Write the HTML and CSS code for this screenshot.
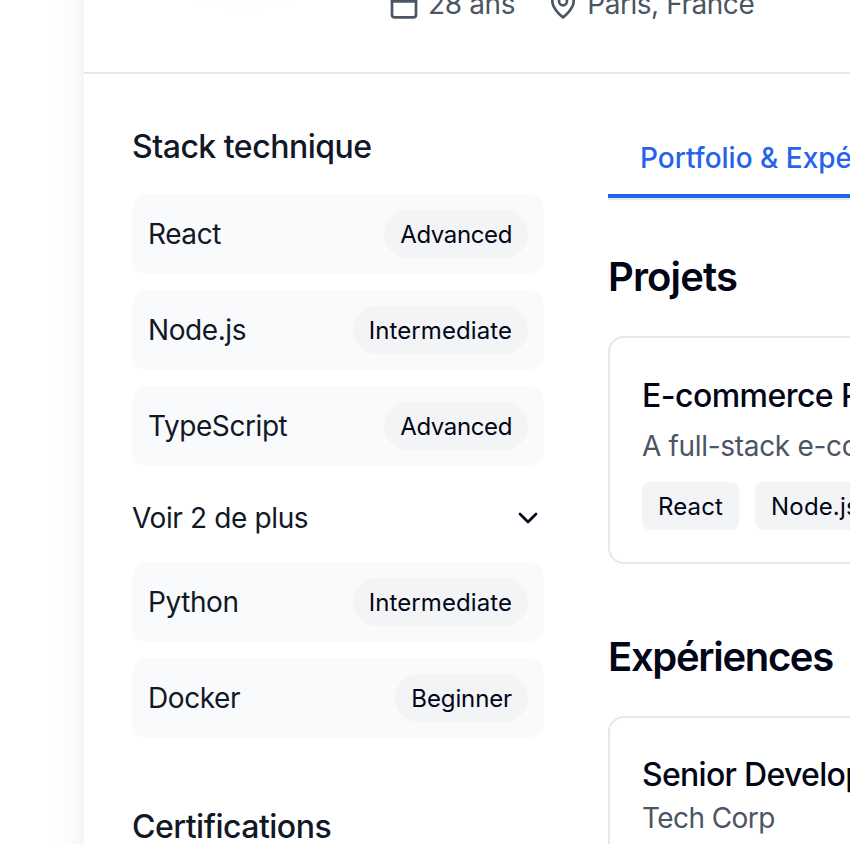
FILE: index.html
```html
<!DOCTYPE html>
<html lang="fr">
<head>
<meta charset="utf-8">
<title>Profil</title>
<link rel="stylesheet" href="styles.css">
</head>
<body>
<main class="card">
  <header class="profile">
    <div class="avatar"></div>
    <div class="meta">
      <span class="meta-item age"><svg class="icon" viewBox="0 0 24 24"><path d="M8 2v4M16 2v4M3 10h18"/><rect x="3" y="4" width="18" height="18" rx="2"/></svg><span>28 ans</span></span>
      <span class="meta-item place"><svg class="icon" viewBox="0 0 24 24"><path d="M20 10c0 6-8 12-8 12s-8-6-8-12a8 8 0 0 1 16 0Z"/><circle cx="12" cy="10" r="3"/></svg><span>Paris, France</span></span>
    </div>
  </header>
  <div class="columns">
    <aside class="side">
      <h3 class="side-title">Stack technique</h3>
      <ul class="skills">
        <li class="skill"><span>React</span><span class="level adv">Advanced</span></li>
        <li class="skill"><span>Node.js</span><span class="level int">Intermediate</span></li>
        <li class="skill"><span>TypeScript</span><span class="level adv">Advanced</span></li>
      </ul>
      <button class="more"><span>Voir 2 de plus</span><svg class="chevron" viewBox="0 0 24 24"><path d="m6 9 6 6 6-6"/></svg></button>
      <ul class="skills">
        <li class="skill"><span>Python</span><span class="level int">Intermediate</span></li>
        <li class="skill"><span>Docker</span><span class="level beg">Beginner</span></li>
      </ul>
      <h3 class="side-title cert">Certifications</h3>
    </aside>
    <section class="content">
      <nav class="tabs"><a class="tab">Portfolio &amp; Expériences</a></nav>
      <h2 class="section-title">Projets</h2>
      <article class="box project">
        <h4 class="box-title">E-commerce Platform</h4>
        <p class="desc">A full-stack e-commerce platform</p>
        <div class="tags"><span class="tag">React</span><span class="tag">Node.js</span></div>
      </article>
      <h2 class="section-title exp">Expériences</h2>
      <article class="box job">
        <h4 class="box-title">Senior Developer</h4>
        <p class="desc">Tech Corp</p>
      </article>
    </section>
  </div>
</main>
</body>
</html>
```
FILE: styles.css
```css
* { box-sizing: border-box; margin: 0; padding: 0; }
html, body { width: 850px; height: 844px; overflow: hidden; }
body { background: #fff; font-family: Inter, sans-serif; color: #111827; padding-left: 84px; }
.card { width: 1200px; height: 1400px; margin-top: -200px; padding-top: 200px; background: #fff; box-shadow: 0 40px 46px -10px rgba(0, 0, 0, .1), 0 16px 20px -12px rgba(0, 0, 0, .1); }
.profile { height: 74px; border-bottom: 2px solid #e5e7eb; display: flex; }
.avatar { width: 224px; height: 224px; margin: -248px 32px 0 48px; flex: none; border-radius: 50%; box-shadow: 0 20px 30px -6px rgba(0, 0, 0, .05); }
.meta { display: flex; gap: 32px; height: 32px; margin-top: -12px; color: #4b5563; font-size: 28px; line-height: 32px; }
.meta-item { display: flex; align-items: center; gap: 8px; }
.age { letter-spacing: -.35px; }
.place { letter-spacing: -.45px; }
.icon { width: 32px; height: 32px; fill: none; stroke: currentColor; stroke-width: 2; stroke-linecap: round; stroke-linejoin: round; }
.columns { display: flex; gap: 64px; padding: 48px; }
.side { width: 412px; flex: none; }
.side-title { font-size: 32px; line-height: 48px; font-weight: 500; letter-spacing: -.5px; padding-top: 1px; margin-bottom: 23px; }
.skills { list-style: none; display: grid; gap: 16px; }
.skill { height: 80px; padding: 0 16px; border-radius: 16px; background: #f9fafb; display: flex; align-items: center; justify-content: space-between; font-size: 28px; line-height: 40px; letter-spacing: -.42px; }
.level { height: 48px; line-height: 50px; padding: 0 16px; border-radius: 24px; background: #f3f4f6; font-size: 24px; color: #020617; }
.adv { letter-spacing: -.38px; }
.int { letter-spacing: .08px; }
.beg { letter-spacing: -.12px; }
.more { width: 100%; height: 96px; padding-top: 8px; border: 0; background: none; font: 28px Inter, sans-serif; letter-spacing: -.37px; color: #111827; display: flex; align-items: center; justify-content: space-between; }
.chevron { width: 32px; height: 32px; fill: none; stroke: #020617; stroke-width: 2; stroke-linecap: round; stroke-linejoin: round; }
.cert { margin-top: 64px; }
.content { width: 900px; flex: none; }
.tabs { height: 78px; display: flex; border-bottom: 2px solid #e5e7eb; }
.tab { padding: 16px 32px 0; border-bottom: 4px solid #2563eb; color: #2563eb; font-size: 28px; line-height: 40px; font-weight: 500; white-space: nowrap; }
.section-title { margin-top: 49px; font-size: 40px; line-height: 56px; font-weight: 600; letter-spacing: -.85px; color: #020617; margin-bottom: 31px; }
.box { border: 2px solid #e2e8f0; border-radius: 16px; padding: 32px; }
.project { height: 228px; }
.job { height: 300px; }
.box-title { font-size: 32px; line-height: 52px; font-weight: 500; letter-spacing: -.55px; color: #020617; margin-bottom: 4px; }
.desc { font-size: 28px; line-height: 40px; letter-spacing: -.32px; color: #4b5563; }
.tags { display: flex; gap: 16px; margin-top: 16px; }
.tag { height: 48px; line-height: 50px; padding: 0 16px; border-radius: 8px; background: #f3f4f6; font-size: 24px; letter-spacing: .15px; color: #020617; }
.section-title.exp { margin-top: 65px; letter-spacing: -1.32px; }
.job .box-title { line-height: 46px; padding-top: 2px; margin-bottom: 0; letter-spacing: -.7px; }
.job .desc { letter-spacing: -.58px; }
```
